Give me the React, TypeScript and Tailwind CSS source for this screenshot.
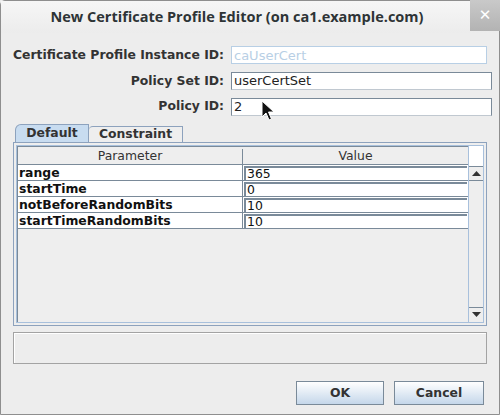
import React from 'react';

const rows = [
  { name: 'range', value: '365' },
  { name: 'startTime', value: '0' },
  { name: 'notBeforeRandomBits', value: '10' },
  { name: 'startTimeRandomBits', value: '10' },
];

const dv = { fontFamily: '"DejaVu Sans", "Liberation Sans", sans-serif' };

function Cursor() {
  return (
    <svg className="absolute left-[261px] top-[100px]" width="14" height="22" viewBox="0 0 14 22">
      <path d="M1 1 L1 17 L5 13 L8 20 L10.5 19 L7.5 12 L13 12 Z" fill="#111" stroke="#fff" strokeWidth="1" />
    </svg>
  );
}

export default function App() {
  return (
    <div className="relative h-[415px] w-[500px] overflow-hidden bg-[#ededed]" style={dv}>
      <div className="flex h-full flex-col rounded-t-[5px] border border-[#8e8e8e]">
        {/* title bar */}
        <div className="relative flex h-[32px] shrink-0 items-center justify-center bg-gradient-to-b from-[#f6f6f6] to-[#ececec] pr-[26px]">
          <span
            className="whitespace-nowrap text-[14.5px] font-bold text-[#2e3436]"
            style={{ fontFamily: '"Open Sans", "DejaVu Sans", sans-serif' }}
          >
            New Certificate Profile Editor (on ca1.example.com)
          </span>
          <div className="absolute right-[-1px] top-[-1px] flex h-[31px] w-[30px] items-center justify-center bg-gradient-to-b from-[#c9c9c9] to-[#b3b3b3] text-[15px] font-bold text-white">
            ✕
          </div>
        </div>

        {/* form */}
        <div className="mt-[13px] grid grid-cols-[215px_1fr] items-center gap-x-[7px] gap-y-[7px] pl-[8px] pr-[7px] text-[12.4px]">
          <span className="whitespace-nowrap text-right font-bold text-[#333]">Certificate Profile Instance ID:</span>
          <div className="flex h-[18px] w-[256px] items-center border border-[#b8cfe5] bg-white px-[2px] text-[13px] text-[#b8cfe5]">
            caUserCert
          </div>
          <span className="whitespace-nowrap text-right font-bold text-[#333]">Policy Set ID:</span>
          <div className="flex h-[18px] items-center border border-[#7a8a99] border-b-[#c0c8d0] bg-white px-[2px] text-[13px] text-[#222]">
            userCertSet
          </div>
          <span className="whitespace-nowrap text-right font-bold text-[#333]">Policy ID:</span>
          <div className="flex h-[18px] items-center border border-[#7a8a99] border-b-[#c0c8d0] bg-white px-[2px] text-[13px] text-[#222]">
            2
          </div>
        </div>

        {/* tabs */}
        <div className="mt-[8px] flex items-end pl-[14px] text-[12.4px] font-bold text-[#333]">
          <div className="flex h-[18px] w-[74px] items-center justify-center rounded-tl-[6px] border border-b-0 border-[#8da2bd] bg-[#c8dcf0]">
            Default
          </div>
          <div className="flex h-[16px] w-[94px] items-center justify-center rounded-tl-[4px] border border-b-0 border-l-0 border-[#8da2bd] bg-[#eeeeee]">
            Constraint
          </div>
        </div>

        {/* tab panel */}
        <div className="mx-[12px] h-[184px] border border-[#8da2bd] bg-[#eeeeee] p-[2px]">
          <div className="flex h-full border border-[#a8c0dc]">
            <div className="flex flex-1 flex-col border-l border-t border-[#7a8a99]">
              <div className="flex h-[18px] border-b border-[#7a8a99] pt-[2px] text-[12.4px] text-[#333]">
                <div className="flex w-[225px] items-center justify-center border-r border-[#7a8a99]">Parameter</div>
                <div className="flex flex-1 items-center justify-center">Value</div>
              </div>
              {rows.map((r) => (
                <div key={r.name} className="flex h-[16px] border-b border-[#7a8a99] bg-white text-[12.4px] text-[#111]">
                  <div className="flex w-[225px] items-center whitespace-nowrap border-r border-[#7a8a99] pl-[1px] pt-[1px] font-bold">
                    {r.name}
                  </div>
                  <div className="flex flex-1 p-[1px] pb-0">
                    <div className="flex flex-1 items-center border-l-2 border-t-2 border-[#7a8a99] pl-[1px]">
                      {r.value}
                    </div>
                  </div>
                </div>
              ))}
              <div className="flex-1" />
            </div>
            {/* scrollbar */}
            <div className="flex w-[15px] flex-col border-l border-[#a8c0dc] bg-[#eeeeee]">
              <div className="h-[21px] border-b border-[#7a8a99] bg-white" />
              <div className="flex h-[14px] items-center justify-center border-b border-[#7a8a99]">
                <svg width="9" height="5" viewBox="0 0 9 5">
                  <path d="M0 5 L4.5 0 L9 5 Z" fill="#333" />
                </svg>
              </div>
              <div className="flex-1" />
              <div className="flex h-[15px] items-center justify-center border-t border-[#7a8a99]">
                <svg width="9" height="5" viewBox="0 0 9 5">
                  <path d="M0 0 L9 0 L4.5 5 Z" fill="#333" />
                </svg>
              </div>
            </div>
          </div>
        </div>

        {/* status box */}
        <div className="mx-[12px] mt-[6px] h-[32px] border border-[#a3a3a3] shadow-[inset_1px_1px_0_#fff]" />

        {/* buttons */}
        <div className="mt-[17px] flex justify-end gap-[10px] pr-[15px] text-[12.4px] font-bold text-[#333]">
          <button className="h-[24px] w-[88px] border border-[#7a8a99] bg-gradient-to-b from-[#ffffff] to-[#c5d7ea]">OK</button>
          <button className="h-[24px] w-[90px] border border-[#7a8a99] bg-gradient-to-b from-[#ffffff] to-[#c5d7ea]">Cancel</button>
        </div>
      </div>
      <Cursor />
    </div>
  );
}
